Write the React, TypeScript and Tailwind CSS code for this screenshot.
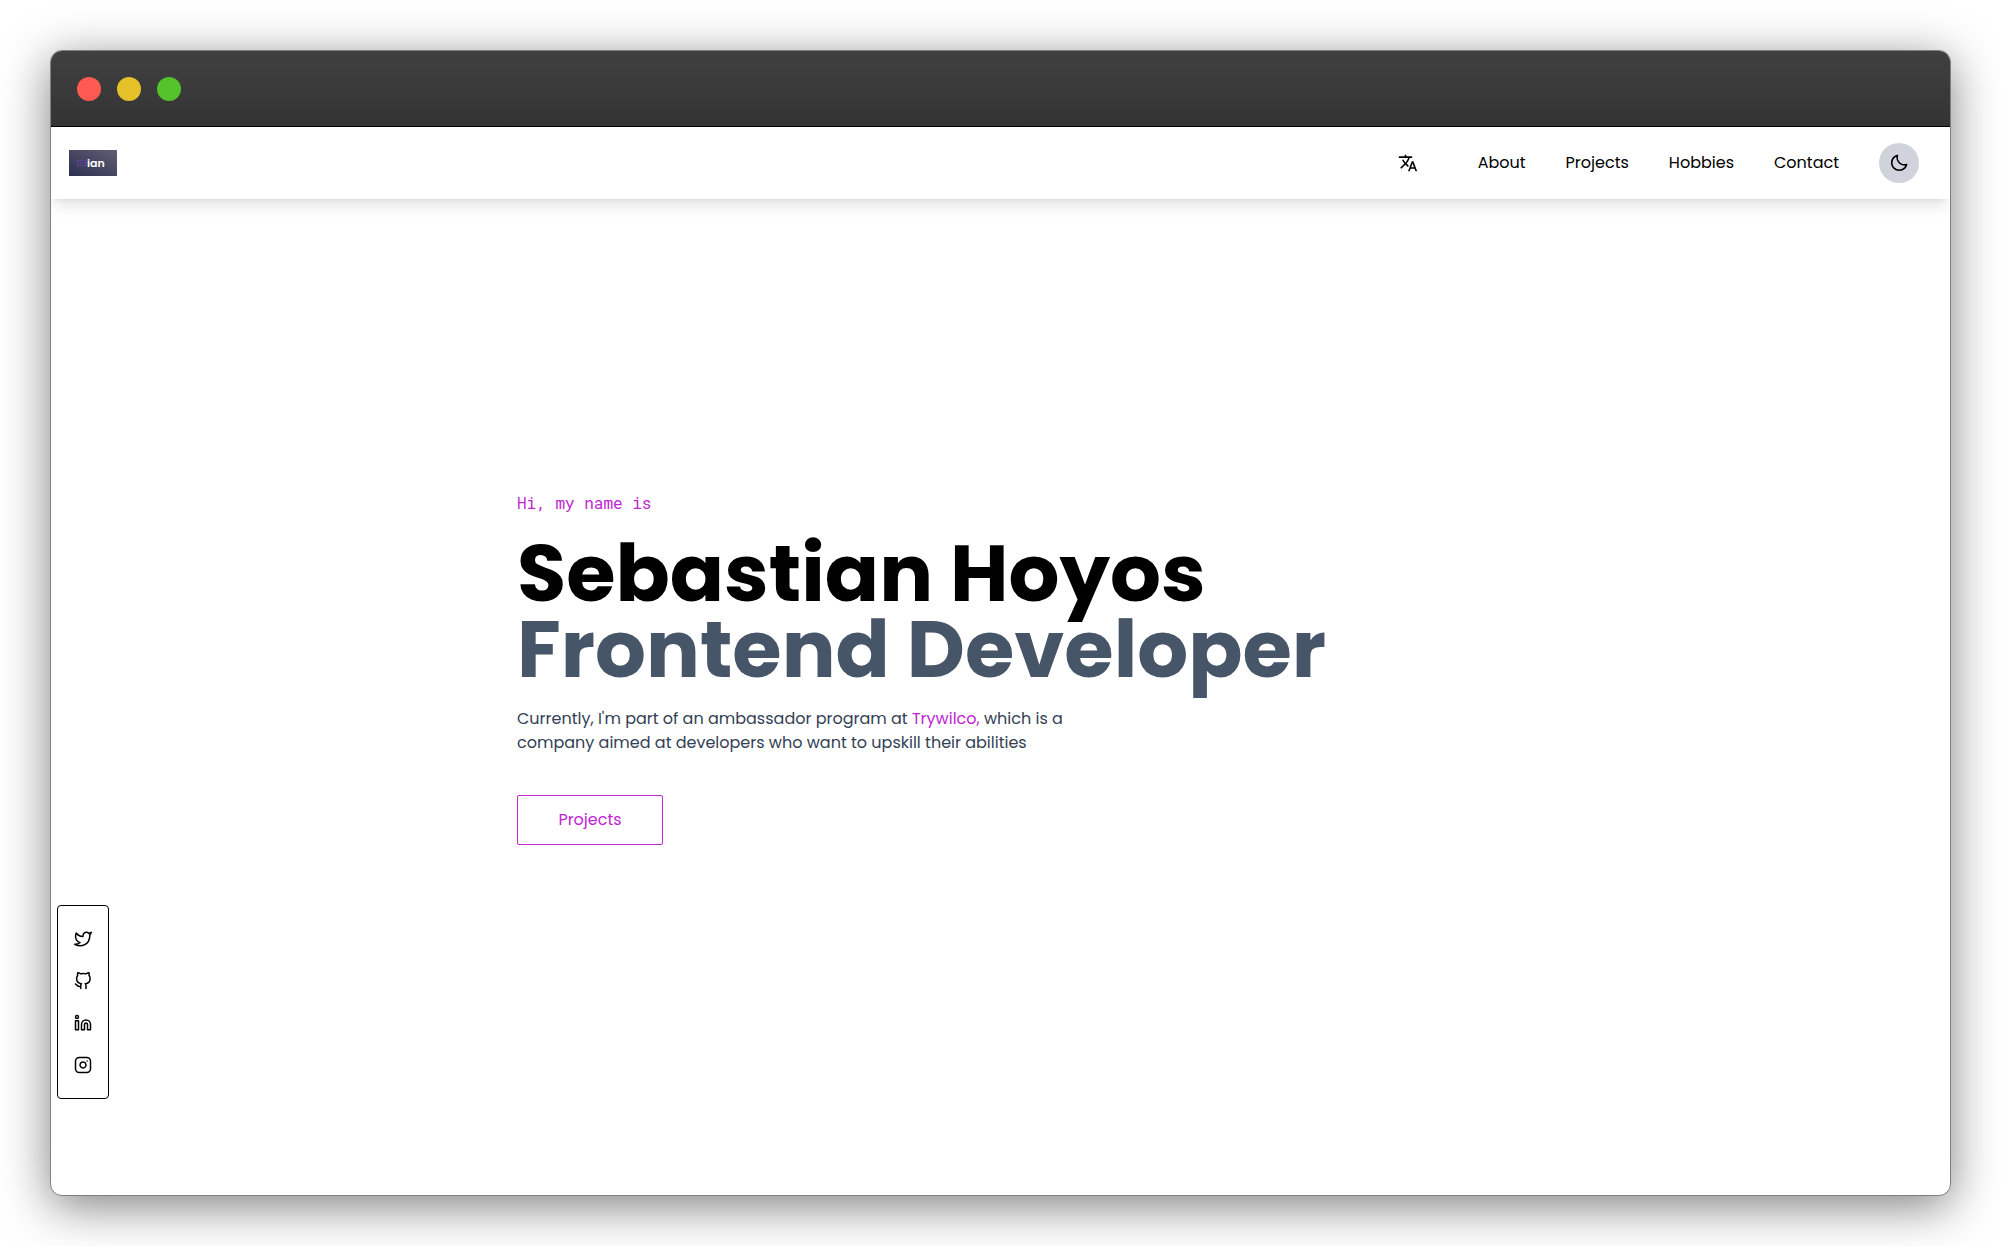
import { FiGithub, FiInstagram, FiLinkedin, FiTwitter } from "react-icons/fi";
import { MdTranslate } from "react-icons/md";
import { BiMoon } from "react-icons/bi";

const links = ["About", "Projects", "Hobbies", "Contact"];

const socials = [
  { label: "Twitter", Icon: FiTwitter },
  { label: "GitHub", Icon: FiGithub },
  { label: "LinkedIn", Icon: FiLinkedin },
  { label: "Instagram", Icon: FiInstagram },
];

function Logo() {
  return (
    <a href="#home" aria-label="Home" className="flex h-[26px] w-12 items-center gap-px bg-linear-to-tr from-[#2d3050] to-[#625f74] pl-2 text-[11px] leading-none font-semibold text-white">
      <svg viewBox="0 0 9 6" className="h-[6px] w-[9px]" fill="none" aria-hidden="true">
        <rect x="0.5" y="0.5" width="8" height="5" fill="#3d3a63" stroke="#5b4494" />
        <path d="M1 3h7" stroke="#8a4a9c" strokeDasharray="1 1" />
      </svg>
      <span>ian</span>
    </a>
  );
}

export default function App() {
  return (
    <div className="min-h-screen bg-white px-[50px] py-[50px] font-['Poppins','Inter',sans-serif] text-black">
      <div className="flex min-h-[calc(100vh-100px)] flex-col overflow-hidden rounded-xl border border-[#808080] bg-white shadow-[0_10px_48px_rgba(0,0,0,0.5)]">
        <div className="flex h-[76px] items-center gap-4 border-b border-black bg-linear-to-b from-[#404040] to-[#343434] px-[26px]">
          <span className="size-6 rounded-full bg-[#ff5a52]" />
          <span className="size-6 rounded-full bg-[#e6c029]" />
          <span className="size-6 rounded-full bg-[#54c22b]" />
        </div>
        <header className="flex h-[72px] items-center justify-between pr-[31px] pl-[18px] shadow-lg">
          <Logo />
          <nav className="flex items-center gap-10">
            <button type="button" aria-label="Change language" className="mr-5">
              <MdTranslate size={20} />
            </button>
            {links.map((label) => (
              <a key={label} href={"#" + label.toLowerCase()} className="text-base whitespace-nowrap">
                {label}
              </a>
            ))}
            <button type="button" aria-label="Dark mode" className="grid size-10 place-items-center rounded-full bg-[#d1d3dc]">
              <BiMoon size={20} />
            </button>
          </nav>
        </header>
        <main className="flex flex-1 flex-col items-start">
          <section className="ml-[466px] flex flex-col items-start pt-[292px]">
            <p className="font-['Roboto_Mono','Noto_Sans_Mono','DejaVu_Sans_Mono',monospace] text-base text-[#c026d3]">Hi, my name is</p>
            <h1 className="mt-5 text-[80px] leading-[76px] font-bold whitespace-nowrap">
              Sebastian Hoyos
              <span className="block text-[#475569]">Frontend Developer</span>
            </h1>
            <p className="mt-5 text-base leading-6 whitespace-nowrap text-[#334155]">
              Currently, I'm part of an ambassador program at <a href="#trywilco" className="text-[#c026d3]">Trywilco,</a> which is a
              <br />
              company aimed at developers who want to upskill their abilities
            </p>
            <button type="button" className="mt-10 h-[50px] w-[146px] rounded-xs border border-[#c026d3] text-base text-[#c026d3]">
              Projects
            </button>
          </section>
          <aside className="mt-auto mb-24 ml-[6px] flex flex-col items-center gap-6 rounded border border-black px-4 py-6">
            {socials.map(({ label, Icon }) => (
              <a key={label} href={"#" + label.toLowerCase()} aria-label={label}>
                <Icon size={18} />
              </a>
            ))}
          </aside>
        </main>
      </div>
    </div>
  );
}
